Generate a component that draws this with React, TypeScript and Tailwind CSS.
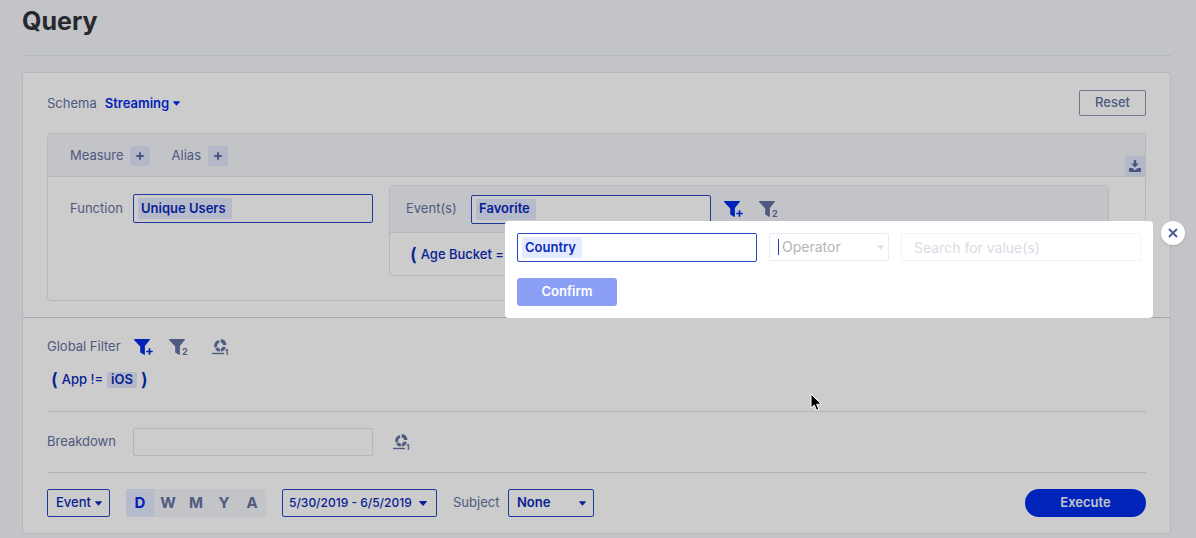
import React, { useState } from 'react'

const Caret: React.FC<{ className?: string }> = ({ className = '' }) => (
  <svg viewBox="0 0 8 5" className={`h-[5px] w-2 fill-current ${className}`} aria-hidden="true">
    <path d="M.6 0h6.8c.5 0 .7.5.4.8L4.5 4.6c-.3.3-.7.3-1 0L.2.8C-.1.5.1 0 .6 0z" />
  </svg>
)

const Plus: React.FC<{ className: string }> = ({ className }) => (
  <svg viewBox="0 0 10 10" className={className} fill="none" stroke="currentColor" strokeWidth="2.4" aria-hidden="true">
    <path d="M5 .4v9.2M.4 5h9.2" />
  </svg>
)

const Funnel = () => (
  <svg viewBox="0 0 16 16" className="h-4 w-4 fill-current" aria-hidden="true">
    <path d="M.4 0h15.2c.4 0 .5.4.3.7L10.9 7v8.4c0 .5-.4.7-.8.4L6.2 13.4V7.4L.1.9C-.1.5 0 0 .4 0z" />
  </svg>
)

const Cohort = () => (
  <svg viewBox="0 0 18 18" className="h-[18px] w-[18px]" aria-hidden="true">
    <g fill="none" stroke="currentColor" strokeWidth="3">
      <path d="M7.2 3.4A4.4 4.4 0 0 0 3.9 9.2" />
      <path d="M4.4 10.1A4.4 4.4 0 0 0 7.8 12.2" />
      <path d="M8.8 12.2A4.4 4.4 0 0 0 12.3 8.8" />
    </g>
    <path d="M8.7 1C11.9 1.2 14.3 3.7 14.5 7h-3.4C10.9 5.5 10 4.6 8.7 4.4z" fill="currentColor" />
    <path d="M0 15.5h12" stroke="currentColor" strokeWidth="1.4" />
  </svg>
)

const AddFilter = () => (
  <button type="button" aria-label="Add filter" className="flex items-end text-[#002ce9]">
    <Funnel />
    <Plus className="-ml-1 h-[7px] w-[7px]" />
  </button>
)

const FilterTwo = () => (
  <button type="button" aria-label="Filter 2" className="flex items-end text-[#6371a0]">
    <Funnel />
    <span className="-ml-[3px] text-[9px] leading-[7px] font-bold">2</span>
  </button>
)

const CohortButton = () => (
  <button type="button" aria-label="Cohort 1" className="flex items-end text-[#6371a0]">
    <Cohort />
    <span className="-ml-[5px] text-[8px] leading-[7px] font-bold">1</span>
  </button>
)

const TagInput: React.FC<{ label: string; id: string; tag: string }> = ({ label, id, tag }) => (
  <div className="flex h-[29px] w-60 items-center rounded-xs border border-[#2849c4] bg-white px-1">
    <span className="flex h-[21px] shrink-0 items-center rounded-xs bg-[#e4eaff] pr-[6px] pl-[3px] font-semibold text-[#0a2ab8]">
      {tag}
    </span>
    <input id={id} aria-label={label} className="min-w-0 flex-1 outline-none" />
  </div>
)

const AddButton: React.FC<{ label: string }> = ({ label }) => (
  <button
    type="button"
    aria-label={label}
    className="flex h-5 w-5 items-center justify-center rounded-xs bg-[#e0e6fa] text-[#5b6a9c]"
  >
    <Plus className="h-2 w-2" />
  </button>
)

const periods = ['D', 'W', 'M', 'Y', 'A']

const QueryForm = () => {
  const [period, setPeriod] = useState('D')

  return (
    <section className="rounded-xs border border-[#e2e5ee] bg-white pb-4">
      {/* Schema */}
      <div className="flex items-center justify-between px-6 pt-[17px]">
        <div className="flex items-center gap-2 pt-px">
          <label htmlFor="schema">Schema</label>
          <div className="relative flex items-center text-[#002ce9]">
            <select id="schema" className="appearance-none pr-[10px] font-semibold">
              <option>Streaming</option>
            </select>
            <Caret className="pointer-events-none absolute right-0 w-[7px]" />
          </div>
        </div>
        <button type="button" className="h-[26px] w-[67px] rounded-xs border border-[#8b96b8] font-medium">
          Reset
        </button>
      </div>

      {/* Measure */}
      <div className="mx-6 mt-[17px] rounded border border-[#e2e5ee]">
        <div className="flex h-[43px] items-end justify-between rounded-t border-b border-[#e2e5ee] bg-[#f3f5fa]">
          <div className="flex h-full items-center pt-px pl-[22px]">
            <span>Measure</span>
            <span className="ml-[6px] flex">
              <AddButton label="Add measure" />
            </span>
            <span className="ml-[22px]">Alias</span>
            <span className="ml-[7px] flex">
              <AddButton label="Add alias" />
            </span>
          </div>
          <button
            type="button"
            aria-label="Download"
            className="flex h-5 w-5 items-center justify-center rounded-tl-xs bg-[#e0e6fa] text-[#5b6a9c]"
          >
            <svg viewBox="0 0 12 12" className="h-3 w-3 fill-current" aria-hidden="true">
              <path d="M4.8 0h2.4v3.6h2.6L6 7.6 2.2 3.6h2.6z" />
              <path d="M.6 8h2.6L6 10.2 8.8 8h2.6c.4 0 .6.2.6.6v2.8c0 .4-.2.6-.6.6H.6c-.4 0-.6-.2-.6-.6V8.600C0 8.200.2 8 .6 8z" />
            </svg>
          </button>
        </div>

        <div className="flex items-start pt-2 pb-6 pl-[22px]">
          <div className="flex items-center pt-[9px]">
            <label htmlFor="function" className="w-[63px]">
              Function
            </label>
            <TagInput id="function" label="Function" tag="Unique Users" />
          </div>
          <div className="mr-9 ml-4 min-w-0 flex-1 rounded border border-[#e2e5ee]">
            <div className="flex h-[47px] items-center rounded-t border-b border-[#e2e5ee] bg-[#f3f5fa] pl-4">
              <label htmlFor="events" className="w-[65px]">
                Event(s)
              </label>
              <TagInput id="events" label="Events" tag="Favorite" />
              <div className="ml-[13px] flex gap-4">
                <AddFilter />
                <FilterTwo />
              </div>
            </div>
            <div className="flex h-[42px] items-center gap-1 pt-px pl-5 text-[#0a2ab8]">
              <span className="text-lg leading-5 font-semibold">(</span>
              <span className="font-medium">Age Bucket =</span>
            </div>
          </div>
        </div>
      </div>

      {/* Global filter */}
      <div className="mt-4 border-t border-[#d0d2d8] px-6 pt-[19px]">
        <div className="flex h-5 items-center">
          <span className="w-[87px]">Global Filter</span>
          <div className="flex items-center gap-4">
            <AddFilter />
            <FilterTwo />
            <span className="ml-2 flex">
              <CohortButton />
            </span>
          </div>
        </div>
        <div className="mt-[13px] flex h-5 items-center gap-1 pl-1 text-[#0a2ab8]">
          <span className="text-lg leading-5 font-semibold">(</span>
          <span className="font-medium">App !=</span>
          <span className="flex h-4 items-center rounded-xs bg-[#e0e6fa] px-1 font-semibold">iOS</span>
          <span className="text-lg leading-5 font-semibold">)</span>
        </div>
      </div>

      {/* Breakdown */}
      <div className="mx-6 mt-[21px] flex items-center border-y border-[#dfe2ea] py-4">
        <label htmlFor="breakdown" className="w-[86px]">
          Breakdown
        </label>
        <input id="breakdown" className="h-7 w-60 rounded-xs border border-[#e0e3eb]" />
        <span className="ml-5 flex">
          <CohortButton />
        </span>
      </div>

      {/* Time range and subject */}
      <div className="mx-6 mt-4 flex items-center">
        <div className="relative flex items-center text-[#0a2ab8]">
          <select
            aria-label="Event type"
            className="h-7 w-[63px] appearance-none rounded-xs border border-[#2849c4] pl-2 font-medium"
          >
            <option>Event</option>
          </select>
          <Caret className="pointer-events-none absolute right-2 w-[7px]" />
        </div>
        <div className="ml-4 flex overflow-hidden rounded-xs bg-[#f3f5fa]">
          {periods.map((item) => (
            <button
              key={item}
              type="button"
              aria-pressed={period === item}
              onClick={() => setPeriod(item)}
              className={`h-7 w-7 text-[15px] font-bold ${period === item ? 'bg-[#e4eaff] text-[#002ce9]' : ''}`}
            >
              {item}
            </button>
          ))}
        </div>
        <button
          type="button"
          className="ml-4 flex h-7 w-[155px] items-center justify-between rounded-xs border border-[#2849c4] pr-[9px] pl-[6px] text-xs font-medium whitespace-nowrap text-[#0a2ab8]"
        >
          5/30/2019 - 6/5/2019
          <Caret className="shrink-0" />
        </button>
        <label htmlFor="subject" className="ml-4 w-[55px]">
          Subject
        </label>
        <div className="relative flex items-center text-[#0a2ab8]">
          <select
            id="subject"
            className="h-7 w-[86px] appearance-none rounded-xs border border-[#2849c4] pl-2 font-semibold"
          >
            <option>None</option>
          </select>
          <Caret className="pointer-events-none absolute right-2 w-[7px]" />
        </div>
        <button type="button" className="ml-auto h-7 w-[121px] rounded-full bg-[#002ce9] font-semibold text-[#f4f6ff]">
          Execute
        </button>
      </div>
    </section>
  )
}

const FilterDialog = () => (
  <div
    role="dialog"
    aria-label="Add filter"
    className="absolute top-[221px] right-[43px] w-[648px] rounded bg-white p-3 text-[13px]"
  >
    <div className="flex items-start gap-3">
      <TagInput id="property" label="Property" tag="Country" />
      <div className="flex h-7 w-[120px] items-center rounded-xs border border-[#e9ebf2] pr-1 pl-2">
        <span className="h-4 w-px bg-[#1c3dbe]" />
        <input
          aria-label="Operator"
          placeholder="Operator"
          className="ml-[3px] min-w-0 flex-1 text-sm outline-none placeholder:text-[#b4b5ba]"
        />
        <Caret className="w-[7px] shrink-0 text-[#dfe2ec]" />
      </div>
      <input
        aria-label="Values"
        placeholder="Search for value(s)"
        className="h-7 w-60 rounded-xs border border-[#f3f4f8] px-3 text-sm placeholder:text-[#d9dbe5]"
      />
    </div>
    <button type="button" className="mt-4 block h-7 w-[100px] rounded-[3px] bg-[#8c9ff6] font-semibold text-white">
      Confirm
    </button>
    <button
      type="button"
      aria-label="Close"
      className="absolute top-0 -right-8 flex h-6 w-6 items-center justify-center rounded-full bg-white text-[#4f5f96] shadow"
    >
      <svg viewBox="0 0 10 10" className="h-[10px] w-[10px]" fill="none" stroke="currentColor" strokeWidth="2" aria-hidden="true">
        <path d="M1 1l8 8M9 1L1 9" />
      </svg>
    </button>
  </div>
)

const App: React.FC = () => (
  <div className="relative min-h-screen bg-[#f3f5fa] font-['Inter','Liberation_Sans',sans-serif] text-[13px] text-[#6371a0]">
    <main className="pt-[5px] pr-[25px] pb-1 pl-[22px]">
      <h1 className="text-[25px] leading-8 font-bold text-[#30323a]">Query</h1>
      <hr className="mt-[18px] mb-4 border-[#e2e5ee]" />
      <QueryForm />
    </main>

    {/* Backdrop */}
    <div className="absolute inset-0 bg-black/20" />

    <FilterDialog />

    {/* Pointer */}
    <svg viewBox="0 0 13 19" className="pointer-events-none absolute top-[393px] left-[810px] h-[19px] w-[13px]" aria-hidden="true">
      <path d="M1 1v14l3.3-3 2.2 5.3 2.4-1-2.2-5.1H11.300z" fill="#000" stroke="#fff" />
    </svg>
  </div>
)

export default App
